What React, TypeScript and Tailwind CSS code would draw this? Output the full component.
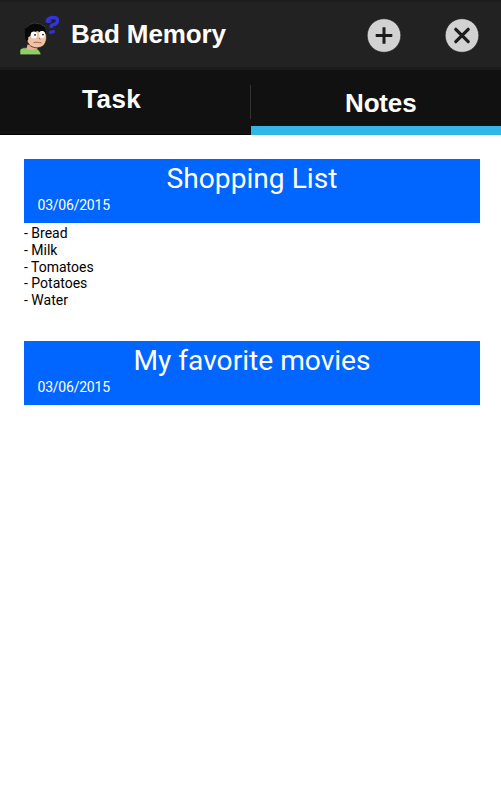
import React from "react";

function Logo() {
  return (
    <svg width="42" height="42" viewBox="0 0 42 42" className="block">
      <path d="M1 40.700V36c.5-1.600 3-2.200 6-2.200h9c3 1 5.300 3.500 6 6.900z" fill="#90cc69" stroke="#17240f" strokeWidth=".5" />
      <path d="M8.500 30.500L7.500 35c3 1.500 8 1.300 11-.5l1-2z" fill="#e6b291" />
      <path d="M8 20c3-4 14-7 18-3 2.500 5 1.800 11-1.500 14.500-3.500 3-9.500 3-13 .3C8 29 6.500 24 8 20z" fill="#f0c3a4" stroke="#20140d" strokeWidth=".7" />
      <path d="M7.300 27.500C6.500 25 5.400 20 6 16.500L5 14.500l3-2.500 2-1.500 3-.4 2-1.200 3 .6 3 .1 2 1.400 3 2-.3 1.200c1.300 1.500 1.600 3.500 1 6l-1.300-2.500-3-.6-2 1-2-1-3 1.500-3.200 0-.8 3.500-2 1-.3 3z" fill="#080808" />
      <path d="M5.500 14.500l6-4.300 4-1.200 6 1 4.800 3" fill="none" stroke="#484848" strokeWidth=".7" />
      <ellipse cx="15" cy="21" rx="3.200" ry="3.600" fill="#fff" />
      <ellipse cx="23" cy="20.600" rx="2.900" ry="3.500" fill="#fff" />
      <circle cx="16" cy="20.900" r=".9" fill="#111" />
      <circle cx="24" cy="20.600" r=".9" fill="#111" />
      <path d="M20 24l1 1.500M14.500 28.800c2.500-1.200 5-.2 8 .1" fill="none" stroke="#7e543d" strokeWidth=".8" />
      <path d="M28.300 7c.5-2 2.500-3.300 5.200-3.500 3-.2 5 .8 5 3 0 2.800-2.200 3.800-5 4.400-1.300.5-1.300 1.600-1.200 3" fill="none" stroke="#3434df" strokeWidth="3.400" />
      <ellipse cx="29.500" cy="7.300" rx="3" ry="1.600" fill="#3434df" />
      <ellipse cx="33" cy="18" rx="3.200" ry="1.800" fill="#3030d4" transform="rotate(-12 33 18)" />
    </svg>
  );
}

function RoundIcon({ kind }: { kind: "add" | "close" }) {
  return (
    <svg width="36" height="36" viewBox="0 0 36 36" className="block">
      <circle cx="18" cy="18.500" r="16.800" fill="#d2d2d2" stroke="#151515" strokeWidth=".6" />
      {kind === "add" ? (
        <path d="M18 10.200v16.600M9.700 18.500h16.600" stroke="#1c1c1c" strokeWidth="3" />
      ) : (
        <path d="M11.800 12.300l12.400 12.400M24.200 12.300L11.800 24.700" stroke="#1c1c1c" strokeWidth="3.200" strokeLinecap="round" />
      )}
    </svg>
  );
}

function Note({ title, date }: { title: string; date: string }) {
  return (
    <div className="h-16 bg-[#0066ff] text-white">
      <h2 className="pt-0.5 text-center text-[28.150px] leading-[35px]">{title}</h2>
      <p className="pl-[13.500px] text-sm leading-[18px] tracking-[-0.220px]">{date}</p>
    </div>
  );
}

export default function App() {
  return (
    <div className="h-[800px] w-[501px] overflow-hidden bg-white font-['Roboto',sans-serif]">
      <header className="flex h-[70px] items-start border-t-2 border-b-[3px] border-t-[#1d1d1d] border-b-[#1b1b1b] bg-[#222222] pl-[19px] font-['Liberation_Sans',Arial,sans-serif]">
        <div className="mt-[12px]"><Logo /></div>
        <h1 className="mt-[17px] ml-[10px] w-[295px] text-[26px] leading-[30px] font-bold tracking-[-0.120px] text-white">Bad Memory</h1>
        <button className="mt-[15px]"><RoundIcon kind="add" /></button>
        <button className="mt-[15px] ml-[42px]"><RoundIcon kind="close" /></button>
      </header>
      <nav className="flex h-[65px] bg-[#111111] font-['Liberation_Sans',Arial,sans-serif] text-[26px] leading-[30px] font-bold text-white">
        <div className="flex w-[251px] justify-between border-b border-black">
          <span className="mt-[14px] ml-[82px] tracking-[0.500px]">Task</span>
          <span className="mt-[15px] h-[34px] w-px bg-[#333333]" />
        </div>
        <div className="flex-1 border-b-[9px] border-[#33b5e5] pt-[18px] pl-[94px] tracking-[-0.150px]">Notes</div>
      </nav>
      <main className="pt-6 pr-[21px] pl-6">
        <Note title="Shopping List" date="03/06/2015" />
        <ul className="mb-[31.500px] pt-[2.300px] pb-[0.200px] text-sm leading-[16.700px] text-black">
          <li>- Bread</li>
          <li>- Milk</li>
          <li>- Tomatoes</li>
          <li>- Potatoes</li>
          <li>- Water</li>
        </ul>
        <Note title="My favorite movies" date="03/06/2015" />
      </main>
    </div>
  );
}
